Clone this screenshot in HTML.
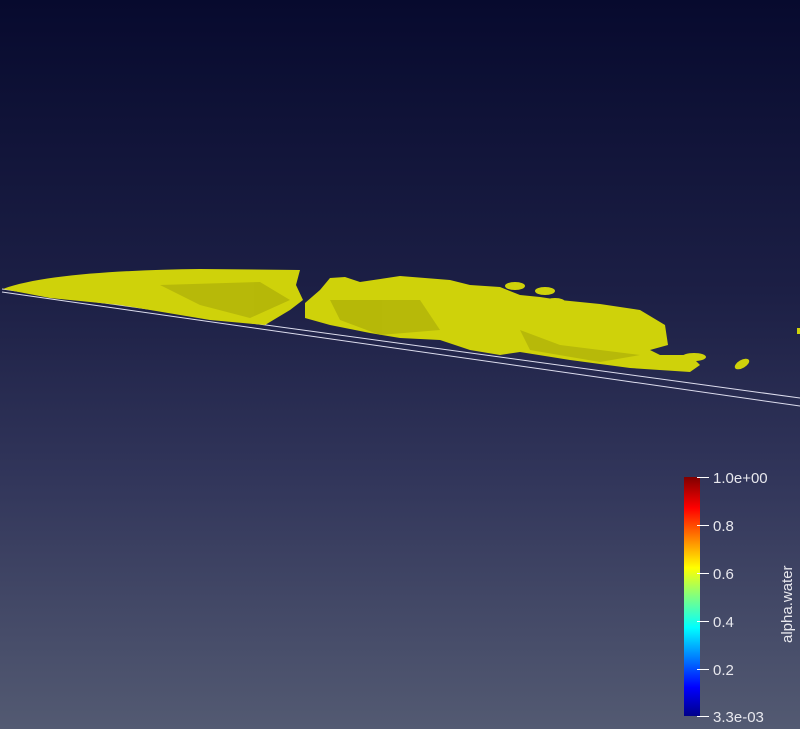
<!DOCTYPE html>
<html><head><style>
html,body{margin:0;padding:0;width:800px;height:729px;overflow:hidden}
body{background:linear-gradient(#070a2e 0%,#1c1f45 40%,#31355a 65%,#535a72 100%);font-family:"Liberation Sans",sans-serif}
</style></head><body>
<svg width="800" height="729" style="position:absolute;left:0;top:0">
<defs>
<linearGradient id="cb" x1="0" y1="1" x2="0" y2="0">
<stop offset="0" stop-color="#00008a"/><stop offset="0.12" stop-color="#0000ff"/><stop offset="0.37" stop-color="#00ffff"/><stop offset="0.5" stop-color="#80ff80"/><stop offset="0.62" stop-color="#ffff00"/><stop offset="0.87" stop-color="#ff0000"/><stop offset="1" stop-color="#800000"/>
</linearGradient>
</defs>
<line x1="2" y1="289" x2="800" y2="398" stroke="#dde" stroke-width="1"/>
<line x1="2" y1="292" x2="800" y2="406" stroke="#dde" stroke-width="1"/>
<g fill="#cfd20a">
<path d="M3,289 C40,275 120,270 200,269 L300,270 L296,285 L303,300 L290,310 L265,325 L210,320 L120,305 L50,298 Z"/>
<path d="M305,303 L320,290 L330,278 L345,277 L360,282 L400,276 L450,280 L470,285 L500,287 L520,295 L540,297 L560,300 L600,304 L640,310 L665,325 L668,345 L650,350 L640,345 L660,355 L690,355 L700,365 L690,372 L630,368 L570,360 L520,352 L500,355 L470,350 L440,340 L400,338 L370,333 L330,325 L305,318 Z"/>
<ellipse cx="742" cy="364" rx="8" ry="4" transform="rotate(-30 742 364)"/>
<ellipse cx="515" cy="286" rx="10" ry="4"/>
<ellipse cx="545" cy="291" rx="10" ry="4"/>
<ellipse cx="555" cy="302" rx="10" ry="4"/>
<ellipse cx="694" cy="357" rx="12" ry="4"/>
<rect x="797" y="328" width="3" height="6"/>
</g>
<g fill="#a6a808" opacity="0.6">
<path d="M160,285 L260,282 L290,300 L250,318 L200,305 Z"/>
<path d="M330,300 L420,300 L440,330 L380,335 L340,320 Z"/>
<path d="M520,330 L560,345 L640,355 L600,362 L530,350 Z"/>
</g>
<rect x="684" y="477" width="16" height="239" fill="url(#cb)"/>
<g stroke="#fff" stroke-width="1">
<line x1="697" y1="477.5" x2="709" y2="477.5"/><line x1="697" y1="525.5" x2="709" y2="525.5"/>
<line x1="697" y1="573.5" x2="709" y2="573.5"/><line x1="697" y1="621.5" x2="709" y2="621.5"/>
<line x1="697" y1="669.5" x2="709" y2="669.5"/><line x1="697" y1="716.5" x2="709" y2="716.5"/>
</g>
<g fill="#e8e8ee" font-family="Liberation Sans, sans-serif" font-size="15">
<text x="713" y="483">1.0e+00</text><text x="713" y="531">0.8</text>
<text x="713" y="579">0.6</text><text x="713" y="627">0.4</text>
<text x="713" y="675">0.2</text><text x="713" y="722">3.3e-03</text>
<text transform="translate(792,643) rotate(-90)">alpha.water</text>
</g>
</svg>
</body></html>
